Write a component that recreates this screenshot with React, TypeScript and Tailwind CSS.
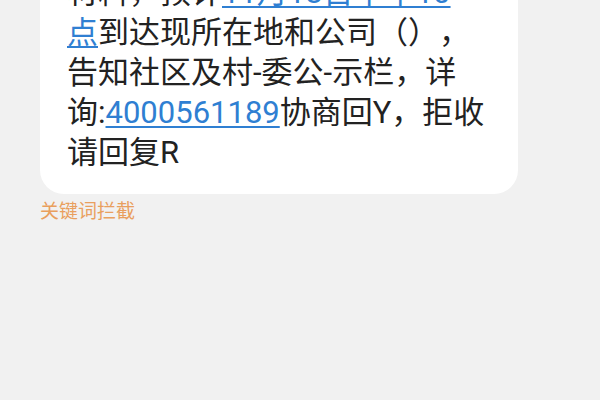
export default function App() {
  const link = "text-[#2f7fd2] underline decoration-[1.5px] underline-offset-[3px]";
  return (
    <div
      className="w-[600px] h-[400px] overflow-hidden bg-[#f1f1f1]"
      style={{ fontFamily: 'Roboto, "Noto Sans CJK SC", sans-serif' }}
    >
      <div className="ml-[40px] mt-[-43px] w-[478px] rounded-[24px] bg-white pl-[27px] pt-[16px] pb-[21px]">
        <p className="text-[31px] leading-[40px] text-[#222222] whitespace-nowrap [text-spacing-trim:space-all]">
          材料，预计<span className={link}>11月18日中午10</span>
          <br />
          <span className={link}>点</span>到达现所在地和公司（），
          <br />
          告知社区及村-委公-示栏，详
          <br />
          询:<span className={link}>4000561189</span>协商回Y，拒收
          <br />
          请回复R
        </p>
      </div>
      <div className="ml-[40px] mt-[5px] text-[19px] leading-[26px] text-[#e99f5e]">关键词拦截</div>
    </div>
  );
}
